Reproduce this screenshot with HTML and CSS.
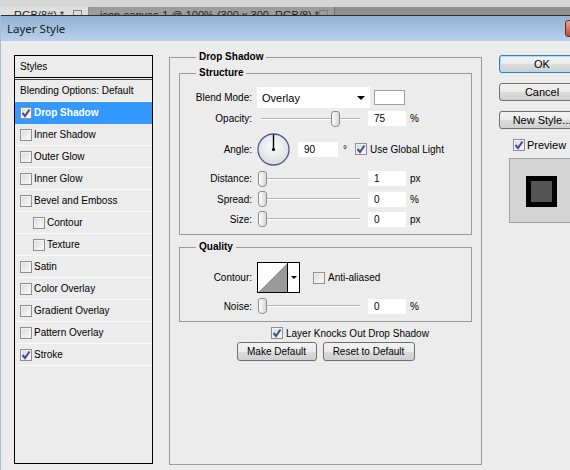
FILE: index.html
```html
<!DOCTYPE html>
<html lang="en">
<head>
    <meta charset="UTF-8">
    <title>Layer Style</title>
    <link rel="stylesheet" href="styles.css">
</head>
<body>

    <!-- Document tabs behind the dialog -->
    <div class="topbar"></div>
    <div class="tabs">
        <div class="tab tab-light"><span>RGB/8#) *</span><i class="tab-x"></i></div>
        <div class="tab tab-dark"><span>icon-canvas-1 @ 100% (300 x 300, RGB/8) *</span><i class="tab-x"></i></div>
    </div>

    <div class="dialog">
        <div class="titlebar">
            <span class="title">Layer Style</span>
            <span class="close"></span>
        </div>

        <div class="body">
            <!-- Styles list -->
            <div class="styles">
                <div class="styles-head">Styles</div>
                <ul class="style-list">
                    <li>Blending Options: Default</li>
                    <li class="active"><span class="cb"><svg width="10" height="10" viewBox="0 0 10 10"><path d="M1.5 5 L4 8 L8.5 1.5" fill="none" stroke="#3b4d98" stroke-width="2"/></svg></span>Drop Shadow</li>
                    <li><span class="cb"></span>Inner Shadow</li>
                    <li><span class="cb"></span>Outer Glow</li>
                    <li><span class="cb"></span>Inner Glow</li>
                    <li><span class="cb"></span>Bevel and Emboss</li>
                    <li class="sub"><span class="cb"></span>Contour</li>
                    <li class="sub"><span class="cb"></span>Texture</li>
                    <li><span class="cb"></span>Satin</li>
                    <li><span class="cb"></span>Color Overlay</li>
                    <li><span class="cb"></span>Gradient Overlay</li>
                    <li><span class="cb"></span>Pattern Overlay</li>
                    <li><span class="cb"><svg width="10" height="10" viewBox="0 0 10 10"><path d="M1.5 5 L4 8 L8.5 1.5" fill="none" stroke="#3b4d98" stroke-width="2"/></svg></span>Stroke</li>
                </ul>
            </div>

            <!-- Drop Shadow settings -->
            <fieldset class="main">
                <legend>Drop Shadow</legend>

                <fieldset class="group structure">
                    <legend>Structure</legend>

                    <div class="row row-tall">
                        <span class="lbl">Blend Mode:</span>
                        <div class="select">Overlay</div>
                        <div class="swatch"></div>
                    </div>

                    <div class="row row-tall">
                        <span class="lbl">Opacity:</span>
                        <div class="slider"><span class="thumb" style="left: 74px"></span></div>
                        <input class="num" type="text" value="75">
                        <span class="unit">%</span>
                    </div>

                    <div class="row row-angle">
                        <span class="lbl">Angle:</span>
                        <svg class="dial" width="33" height="33" viewBox="0 0 33 33">
                            <defs>
                                <radialGradient id="dialFill" cx="50%" cy="40%" r="60%">
                                    <stop offset="0" stop-color="#fdfdfd"/>
                                    <stop offset="1" stop-color="#dadbe0"/>
                                </radialGradient>
                            </defs>
                            <circle cx="16.5" cy="16.5" r="15.5" fill="url(#dialFill)" stroke="#4d5b86" stroke-width="1.3"/>
                            <line x1="16.5" y1="16.5" x2="16.5" y2="1.5" stroke="#000" stroke-width="1.4"/>
                            <circle cx="16.5" cy="16.5" r="1.6" fill="#000"/>
                        </svg>
                        <input class="num wide" type="text" value="90">
                        <span class="deg">°</span>
                        <label class="check"><span class="cb"><svg width="10" height="10" viewBox="0 0 10 10"><path d="M1.5 5 L4 8 L8.5 1.5" fill="none" stroke="#3b4d98" stroke-width="2"/></svg></span>Use Global Light</label>
                    </div>

                    <div class="row row-tall row-gap">
                        <span class="lbl">Distance:</span>
                        <div class="slider"><span class="thumb" style="left: 1px"></span></div>
                        <input class="num" type="text" value="1">
                        <span class="unit">px</span>
                    </div>

                    <div class="row">
                        <span class="lbl">Spread:</span>
                        <div class="slider"><span class="thumb" style="left: 1px"></span></div>
                        <input class="num" type="text" value="0">
                        <span class="unit">%</span>
                    </div>

                    <div class="row">
                        <span class="lbl">Size:</span>
                        <div class="slider"><span class="thumb" style="left: 1px"></span></div>
                        <input class="num" type="text" value="0">
                        <span class="unit">px</span>
                    </div>
                </fieldset>

                <fieldset class="group quality">
                    <legend>Quality</legend>

                    <div class="row row-contour">
                        <span class="lbl">Contour:</span>
                        <div class="contour">
                            <span class="contour-curve"></span>
                            <span class="contour-arrow"></span>
                        </div>
                        <label class="check"><span class="cb"></span>Anti-aliased</label>
                    </div>

                    <div class="row row-noise">
                        <span class="lbl">Noise:</span>
                        <div class="slider"><span class="thumb" style="left: 1px"></span></div>
                        <input class="num" type="text" value="0">
                        <span class="unit">%</span>
                    </div>
                </fieldset>

                <label class="check knock"><span class="cb"><svg width="10" height="10" viewBox="0 0 10 10"><path d="M1.5 5 L4 8 L8.5 1.5" fill="none" stroke="#3b4d98" stroke-width="2"/></svg></span>Layer Knocks Out Drop Shadow</label>

                <div class="actions">
                    <button class="btn btn-make">Make Default</button>
                    <button class="btn btn-reset">Reset to Default</button>
                </div>
            </fieldset>

            <!-- Dialog buttons and preview -->
            <div class="side">
                <button class="btn big default">OK</button>
                <button class="btn big">Cancel</button>
                <button class="btn big">New Style...</button>
                <label class="check preview-check"><span class="cb"><svg width="10" height="10" viewBox="0 0 10 10"><path d="M1.5 5 L4 8 L8.5 1.5" fill="none" stroke="#3b4d98" stroke-width="2"/></svg></span>Preview</label>
                <div class="preview">
                    <div class="preview-square"></div>
                </div>
            </div>
        </div>
    </div>

</body>
</html>
```

FILE: styles.css
```css
/* Base */
* {
    box-sizing: border-box;
    margin: 0;
    padding: 0;
}

body {
    width: 570px;
    height: 470px;
    overflow: hidden;
    background: #ececec;
    font-family: "Liberation Sans", Arial, sans-serif;
    font-size: 10px;
    color: #000;
}

/* Tabs behind the dialog */
.topbar {
    height: 7px;
    background: #d6d6d6;
}

.tabs {
    display: flex;
    height: 8px;
    overflow: hidden;
    background: #8f8f8f;
}

.tab {
    display: flex;
    align-items: flex-start;
    padding-top: 3px;
    font-size: 11px;
    line-height: 11px;
    color: #222;
    white-space: nowrap;
}

.tab-light {
    width: 89px;
    padding-left: 14px;
    background: #dedede;
    border-right: 1px solid #8a8a8a;
}

.tab-dark {
    width: 246px;
    padding-left: 11px;
    background: #9c9c9c;
    border-right: 1px solid #6f6f6f;
}

.tab-x {
    flex: none;
    width: 9px;
    height: 9px;
    margin: 0 6px 0 auto;
    border: 1px solid #808080;
}

/* Dialog frame */
.dialog {
    border-left: 1px solid #a7bfd9;
}

.titlebar {
    display: flex;
    align-items: center;
    height: 26px;
    overflow: hidden;
    border-top: 1px solid #2e2e2e;
    background: linear-gradient(#91b2d4, #bad0eb);
}

.title {
    padding-left: 6px;
    font-family: "Noto Sans", sans-serif;
    font-size: 11.5px;
    color: #1a1a1a;
}

.close {
    flex: none;
    width: 40px;
    height: 17px;
    margin-left: auto;
    margin-right: -35px;
    border: 1px solid #6d2b22;
    border-radius: 3px;
    background: linear-gradient(#e9a493, #c7452f);
}

.body {
    display: flex;
    height: 429px;
    padding-left: 13px;
}

/* Styles list */
.styles {
    flex: none;
    width: 139px;
    height: 409px;
    margin-top: 14px;
    border: 1px solid #000;
}

.styles-head {
    height: 22px;
    padding-left: 5px;
    line-height: 21px;
    border-bottom: 1px solid #000;
}

.style-list {
    list-style: none;
    margin-top: 1px;
    border-top: 1px solid #444;
}

.style-list li {
    display: flex;
    align-items: center;
    height: 22px;
    padding-left: 5px;
    border-bottom: 1px solid #fbfbfb;
    white-space: nowrap;
}

.style-list li.sub {
    padding-left: 18px;
}

.style-list li.active {
    background: #3399ff;
    border-bottom-color: #3399ff;
    color: #fff;
    font-weight: bold;
}

/* Checkbox */
.cb {
    flex: none;
    display: flex;
    align-items: center;
    justify-content: center;
    width: 12px;
    height: 12px;
    margin-right: 2px;
    border: 1px solid #8e8f8f;
    background: linear-gradient(135deg, #d9d9d9, #fbfbfb);
    box-shadow: inset 0 0 0 1px #f2f2f2;
}

.check {
    display: flex;
    align-items: center;
    white-space: nowrap;
}

.check .cb {
    margin-right: 3px;
}

/* Group boxes */
fieldset {
    border: 1px solid #9a9a9a;
}

legend {
    padding: 0 3px;
    line-height: 14px;
    font-weight: bold;
}

.main {
    flex: none;
    width: 313px;
    height: 415px;
    margin: 9px 0 0 16px;
    padding: 0 9px;
}

.main > legend {
    margin-left: 17px;
}

.group > legend {
    margin-left: 16px;
}

.structure {
    margin-top: 2px;
    padding: 7px 0 5px;
}

.quality {
    margin-top: 5px;
    padding: 8px 0 5px;
}

/* Rows */
.row {
    display: flex;
    align-items: center;
    height: 20px;
}

.row-tall {
    height: 21px;
}

.row-angle {
    height: 36px;
    margin-top: 2px;
}

.row-gap {
    margin-top: 1px;
}

.row-contour {
    height: 31px;
}

.row-noise {
    margin-top: 3px;
}

.lbl {
    flex: none;
    width: 72px;
    margin-right: 5px;
    text-align: right;
}

.select {
    display: flex;
    align-items: center;
    width: 113px;
    height: 21px;
    padding-left: 5px;
    background: #fff;
    font-size: 11px;
}

.select::after {
    content: "";
    margin: 0 5px 0 auto;
    border-left: 4px solid transparent;
    border-right: 4px solid transparent;
    border-top: 4px solid #000;
}

.swatch {
    width: 31px;
    height: 15px;
    margin-left: 4px;
    border: 1px solid #a0a0a0;
    background: #fff;
}

.slider {
    position: relative;
    flex: none;
    width: 104px;
    height: 16px;
    margin-right: 7px;
    background:
        linear-gradient(#b3b3b3, #b3b3b3) 4px 7px / 99px 1px no-repeat,
        linear-gradient(#fff, #fff) 4px 8px / 99px 1px no-repeat;
}

.thumb {
    position: absolute;
    top: 0;
    width: 9px;
    height: 16px;
    border: 1px solid #8c8c8c;
    border-radius: 3px 3px 4px 4px;
    background: linear-gradient(90deg, #fff, #d6d6d6);
}

.num {
    flex: none;
    width: 38px;
    height: 15px;
    padding-left: 6px;
    border: 0;
    outline: none;
    background: #fff;
    font-family: "Liberation Sans", Arial, sans-serif;
    font-size: 10px;
    color: #000;
}

.num.wide {
    width: 40px;
}

.unit {
    margin-left: 4px;
}

.dial {
    flex: none;
    margin-right: 8px;
}

.deg {
    margin: 0 8px 0 5px;
}

/* Contour thumbnail */
.contour {
    flex: none;
    display: flex;
    width: 43px;
    height: 31px;
    margin-right: 13px;
    border: 1px solid #000;
    background: #fff;
}

.contour-curve {
    width: 30px;
    border-right: 1px solid #000;
    background: linear-gradient(to top left, #9a9a9a 50%, #fff 50%);
}

.contour-arrow {
    flex: 1;
    display: flex;
    align-items: center;
    justify-content: center;
}

.contour-arrow::after {
    content: "";
    border-left: 3px solid transparent;
    border-right: 3px solid transparent;
    border-top: 3px solid #000;
}

.knock {
    height: 14px;
    margin: 4px 0 0 92px;
}

/* Buttons */
.actions {
    display: flex;
    justify-content: center;
    gap: 6px;
    margin-top: 2px;
}

.btn {
    height: 19px;
    border: 1px solid #707070;
    border-radius: 3px;
    background: linear-gradient(#f2f2f2 0, #ebebeb 50%, #dddddd 50%, #cfcfcf 100%);
    font-family: "Liberation Sans", Arial, sans-serif;
    font-size: 10px;
    color: #000;
}

.btn-make {
    width: 80px;
}

.btn-reset {
    width: 92px;
}

.side {
    flex: none;
    width: 86px;
    margin-left: 17px;
    padding-top: 14px;
}

.btn.big {
    display: block;
    width: 86px;
    height: 18px;
    margin-bottom: 10px;
    font-size: 11px;
    white-space: nowrap;
}

.btn.default {
    border-color: #3c7fb1;
    box-shadow: inset 0 0 0 1px #a6dcf6;
}

.preview-check {
    height: 13px;
    margin: -1px 0 0 14px;
    font-size: 11px;
}

.preview-check .cb {
    margin-right: 2px;
}

.preview {
    width: 80px;
    height: 65px;
    margin: 7px 0 0 10px;
    padding: 17px 0 0 16px;
    border: 1px solid #a0a0a0;
    background: #d4d4d4;
}

.preview-square {
    width: 31px;
    height: 31px;
    border: 5px solid #000;
    background: #555;
}
```
